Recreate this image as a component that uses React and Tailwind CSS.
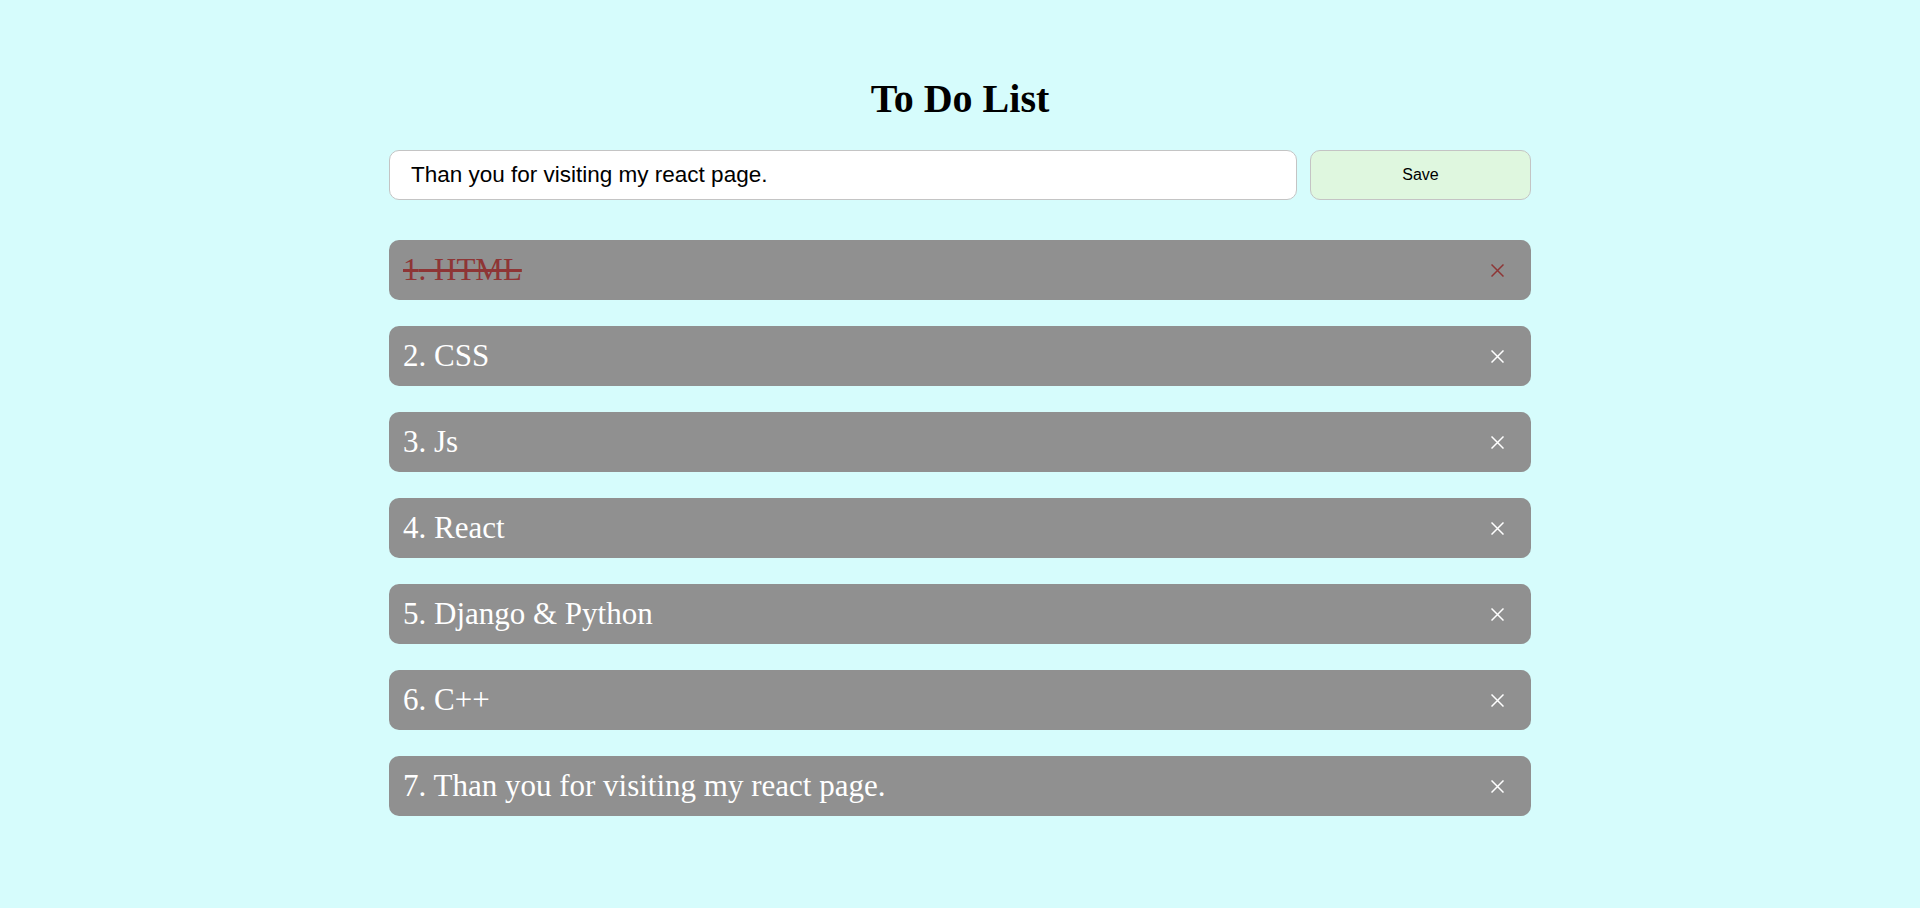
import { useState } from "react";

const initial = [
    { id: 1, text: "HTML", done: true },
    { id: 2, text: "CSS", done: false },
    { id: 3, text: "Js", done: false },
    { id: 4, text: "React", done: false },
    { id: 5, text: "Django & Python", done: false },
    { id: 6, text: "C++", done: false },
    { id: 7, text: "Than you for visiting my react page.", done: false },
];

const CloseIcon = ({ className }) => (
    <svg viewBox="0 0 13 13" width="13" height="13" className={className} fill="none" stroke="currentColor" strokeWidth="1.5">
        <path d="M0.5 0.5 L12.5 12.5 M12.5 0.5 L0.5 12.5" />
    </svg>
);

export default function App() {
    const [todos, setTodos] = useState(initial);
    const [value, setValue] = useState("Than you for visiting my react page.");

    const toggle = (id) => setTodos(todos.map(t => t.id === id ? { ...t, done: !t.done } : t));
    const remove = (id) => setTodos(todos.filter(t => t.id !== id));
    const save = () => {
        if (!value.trim()) return;
        setTodos([...todos, { id: Date.now(), text: value, done: false }]);
    };

    return (
        <div className="min-h-screen bg-[#d6fcfc] pt-[76px] pb-10">
            <div className="w-[1142px] mx-auto">
                <h1 className="text-center text-[40px] leading-[46px] font-bold text-black font-['Liberation_Serif',serif]">
                    To Do List
                </h1>

                <div className="flex gap-[13px] mt-[28px]">
                    <input
                        value={value}
                        onChange={e => setValue(e.target.value)}
                        className="flex-1 h-[50px] bg-white border border-[#c4c4c4] rounded-[10px] pl-[21px] pr-4 text-[22.5px] text-black outline-none font-['Liberation_Sans',Arial,sans-serif]"
                    />
                    <button
                        onClick={save}
                        className="w-[221px] h-[50px] bg-[#dff7df] border border-[#c4c4c4] rounded-[10px] text-[16px] text-black font-['Liberation_Sans',Arial,sans-serif]"
                    >
                        Save
                    </button>
                </div>

                <div className="flex flex-col gap-[26px] mt-[40px]">
                    {todos.map((todo, index) => (
                        <div
                            key={todo.id}
                            className="h-[60px] bg-[#909090] rounded-[10px] flex items-center justify-between pl-[14px] pr-[27px]"
                        >
                            <span
                                onClick={() => toggle(todo.id)}
                                className={`text-[31px] font-['Liberation_Serif',serif] cursor-pointer ${todo.done ? "line-through text-[#8e3535]" : "text-white"}`}
                            >
                                {index + 1}. {todo.text}
                            </span>
                            <button onClick={() => remove(todo.id)} className={todo.done ? "text-[#8e3535]" : "text-white"}>
                                <CloseIcon />
                            </button>
                        </div>
                    ))}
                </div>
            </div>
        </div>
    );
}
